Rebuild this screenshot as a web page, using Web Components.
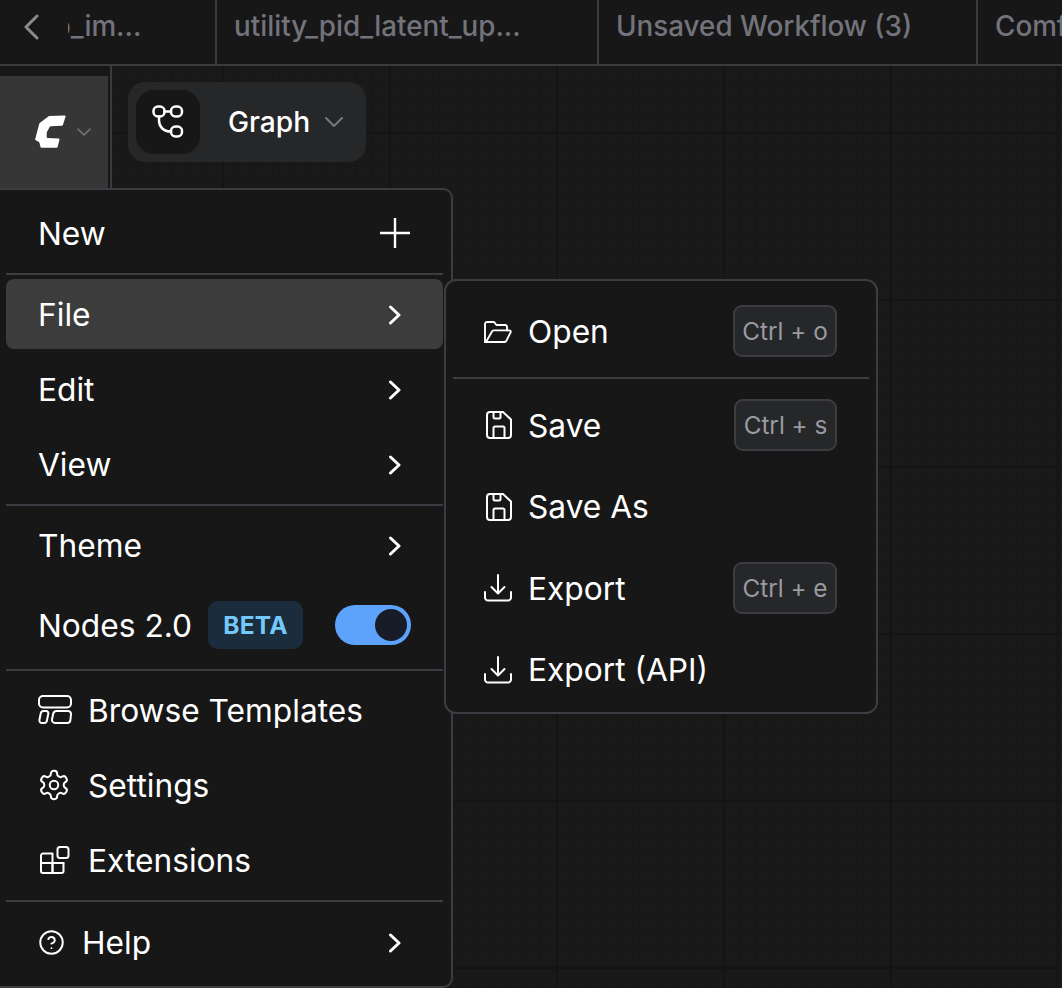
<!DOCTYPE html>
<html lang="en"><head><meta charset="utf-8"><title>Workflow menu</title>
<style>
html,body{margin:0;padding:0;background:#171718;}
body{width:1062px;height:988px;overflow:hidden;font-family:Inter,"Liberation Sans",sans-serif;color:#fff;}
</style></head><body>
<app-shell>
  <tab-bar>
    <work-tab style="--w:149px" clip>o_im...</work-tab>
    <work-tab style="--w:382px">utility_pid_latent_up...</work-tab>
    <work-tab style="--w:379px">Unsaved Workflow (3)</work-tab>
    <work-tab style="--w:200px">ComfyUI</work-tab>
  </tab-bar>
  <work-space>
    <side-bar slot="side"><logo-button></logo-button></side-bar>
    <graph-pill slot="canvas">Graph</graph-pill>
    <main-menu slot="overlay">
      <menu-item plus style="margin-top:8px">New</menu-item>
      <menu-rule style="margin:4.500px 0 4.500px"></menu-rule>
      <menu-item chevron active>File</menu-item>
      <menu-item chevron style="margin-top:5px">Edit</menu-item>
      <menu-item chevron style="margin-top:5px">View</menu-item>
      <menu-rule style="margin:5px 0 4px"></menu-rule>
      <menu-item chevron>Theme</menu-item>
      <menu-item style="margin-top:7px">Nodes 2.0<beta-badge slot="after">BETA</beta-badge><toggle-switch slot="end"></toggle-switch></menu-item>
      <menu-rule style="margin:7px 0 4px"></menu-rule>
      <menu-item icon="templates" gap="50">Browse Templates</menu-item>
      <menu-item icon="gear" gap="50" style="margin-top:5px">Settings</menu-item>
      <menu-item icon="blocks" gap="50" style="margin-top:5px">Extensions</menu-item>
      <menu-rule style="margin:5px 0 5px"></menu-rule>
      <menu-item icon="help" gap="44" chevron>Help</menu-item>
    </main-menu>
    <sub-menu slot="overlay">
      <sub-item icon="folder">Open<key-cap slot="end" style="--kw:104px">Ctrl + o</key-cap></sub-item>
      <menu-rule style="margin:4px 0 6px"></menu-rule>
      <sub-item icon="save">Save<key-cap slot="end" style="--kw:103px;margin-top:0">Ctrl + s</key-cap></sub-item>
      <sub-item icon="save">Save As</sub-item>
      <sub-item icon="download">Export<key-cap slot="end" style="--kw:104px;margin-top:0">Ctrl + e</key-cap></sub-item>
      <sub-item icon="download">Export (API)</sub-item>
    </sub-menu>
  </work-space>
</app-shell>
<script>
const ICONS={
 chevRight:{vb:'0 0 14 20',w:14,h:20,sw:3,d:'<path d="M2.500 2 11 10l-8.500 8"/>'},
 chevDown:{vb:'0 0 20 12',w:20,h:12,sw:2,d:'<path d="M2 2l8 8 8-8"/>'},
 chevBack:{vb:'0 0 16 26',w:16,h:26,sw:3,d:'<path d="M14 2 3 13l11 11"/>'},
 plus:{vb:'0 0 30 30',w:30,h:30,sw:2.400,d:'<path d="M15 0v30M0 15h30"/>'},
 folder:{vb:'0 0 28 22',w:28,h:22,sw:1.900,d:'<path d="M4.500 21H1V3a2 2 0 0 1 2-2h6.200a2 2 0 0 1 1.500.7L12.400 4H21a2 2 0 0 1 2 2v3.400"/><path d="M1 21h19.500a2 2 0 0 0 1.900-1.400l4.200-8.200a1.400 1.400 0 0 0-1.300-2H9.800a2 2 0 0 0-1.800 1.100L2 21"/>'},
 save:{vb:'0 0 26 28',w:26,h:28,sw:2,d:'<path d="M4 1h13l8 7.500V24a3 3 0 0 1-3 3H4a3 3 0 0 1-3-3V4a3 3 0 0 1 3-3z"/><path d="M7.500 1v5a1.500 1.500 0 0 0 1.500 1.500h4a1.500 1.500 0 0 0 1.500-1.500V1"/><path d="M7.500 27V17a1.500 1.500 0 0 1 1.500-1.500h8a1.500 1.500 0 0 1 1.500 1.500v10"/>'},
 download:{vb:'0 0 28 28',w:28,h:28,sw:2,d:'<path d="M1 18v5.500a3 3 0 0 0 3 3h20a3 3 0 0 0 3-3V18"/><path d="M14 1v18M7.500 13l6.500 6.500L20.500 13"/>'},
 templates:{vb:'0 0 34 30',w:34,h:30,sw:2,d:'<rect x="1" y="1" width="32" height="11.500" rx="4"/><path d="M5.500 16h2.700a2.200 2.200 0 0 1 2.100 2.700l-1.400 6.800a2.800 2.800 0 0 1-2.700 2.500H4a2.600 2.600 0 0 1-2.600-3l1.300-6.500A3 3 0 0 1 5.500 16z"/><path d="M18.500 16H30a3 3 0 0 1 3 3.300l-.6 5.700a3.200 3.200 0 0 1-3.200 3H17a3 3 0 0 1-3-3.500l1.200-5.700a3.500 3.500 0 0 1 3.300-2.800z"/>'},
 gear:{vb:'0 0 24 24',w:34,h:34,sw:1.400,d:'<path d="M12.220 2h-.44a2 2 0 0 0-2 2v.18a2 2 0 0 1-1 1.730l-.43.250a2 2 0 0 1-2 0l-.15-.08a2 2 0 0 0-2.730.730l-.22.380a2 2 0 0 0 .73 2.730l.15.100a2 2 0 0 1 1 1.720v.510a2 2 0 0 1-1 1.740l-.15.090a2 2 0 0 0-.73 2.730l.22.380a2 2 0 0 0 2.730.730l.15-.080a2 2 0 0 1 2 0l.43.250a2 2 0 0 1 1 1.730V20a2 2 0 0 0 2 2h.44a2 2 0 0 0 2-2v-.18a2 2 0 0 1 1-1.730l.43-.250a2 2 0 0 1 2 0l.15.080a2 2 0 0 0 2.730-.730l.22-.390a2 2 0 0 0-.73-2.730l-.15-.080a2 2 0 0 1-1-1.740v-.500a2 2 0 0 1 1-1.740l.15-.090a2 2 0 0 0 .73-2.730l-.22-.380a2 2 0 0 0-2.730-.730l-.15.080a2 2 0 0 1-2 0l-.43-.250a2 2 0 0 1-1-1.730V4a2 2 0 0 0-2-2z"/><circle cx="12" cy="12" r="3"/>'},
 blocks:{vb:'0 0 30 28',w:30,h:28,sw:2,d:'<path d="M3 7.500h9.500V27H3a2 2 0 0 1-2-2V9.500a2 2 0 0 1 2-2z"/><path d="M1 17h22.500v8a2 2 0 0 1-2 2h-9V17"/><path d="M12.500 17h11"/><rect x="17.500" y="1" width="11" height="11" rx="2.500"/>'},
 help:{vb:'0 0 24 24',w:27,h:27,sw:1.700,d:'<circle cx="12" cy="12" r="10"/><path d="M9.100 9a3 3 0 0 1 5.800 1c0 2-3 3-3 3"/><path d="M12 17h.01"/>'},
 graph:{vb:'0 0 32 34',w:32,h:34,sw:2.500,d:'<rect x="1.500" y="1.500" width="11" height="10" rx="4.500"/><rect x="19" y="1.500" width="11" height="10" rx="4.500"/><rect x="19" y="21.500" width="11" height="10" rx="4.500"/><path d="M12.500 6.500H19M7 11.500v4c0 6 4 11 12 11"/>'},
 logo:{vb:'0 0 31 34',w:31,h:34,fill:true,d:'<path d="M14.300 1 29.800.500q1 0 .8 1L28 9.800q-.3 1-1.300 1L16 11.200q-.8 0-1.200.6l-2.600 4.600q-.5.800-.5 1.600v4q0 1 1 1l11 .5q1 0 .8 1l-1.900 7.500q-.2.800-1 .8H6.500q-.8 0-1-.8L4.500 28q-.2-.8-1-1.200L.8 25.200q-.8-.5-.6-1.300L4.200 9q.2-.7.800-1.200L13.300 1.400q.4-.4 1-.4z"/>'}
};
function define(name,css,html,init){
  customElements.define(name,class extends HTMLElement{
    constructor(){super();const r=this.attachShadow({mode:'open'});r.innerHTML='<style>'+css+'</style>'+html;}
    connectedCallback(){if(init)init.call(this,this.shadowRoot);}
  });
}
define('ui-icon',`:host{display:block;line-height:0;flex:none}svg{display:block}`,'',function(r){
  const i=ICONS[this.getAttribute('name')];if(!i||r.querySelector('svg'))return;
  const c=this.getAttribute('color')||'currentColor';
  r.innerHTML+=`<svg xmlns="http://www.w3.org/2000/svg" width="${i.w}" height="${i.h}" viewBox="${i.vb}" ${i.fill?`fill="${c}"`:`fill="none" stroke="${c}" stroke-width="${i.sw}" stroke-linecap="round" stroke-linejoin="round"`}>${i.d}</svg>`;
});
define('app-shell',`:host{display:flex;flex-direction:column;width:1062px;height:988px;overflow:hidden;background:#171718}`,'<slot></slot>');
define('tab-bar',`:host{display:flex;flex:none;background:#171718;border-bottom:2px solid #3a3a3f;box-sizing:border-box;height:66px}
.back{flex:none;width:68px;display:flex;align-items:center;padding-left:23px;box-sizing:border-box;color:#8b8b8f;padding-bottom:10px;position:relative;z-index:1;background:#171718}
.strip{display:flex;flex:1;overflow:hidden;min-width:0}
.in{display:flex;flex:none}`,
`<div class="back"><ui-icon name="chevBack"></ui-icon></div><div class="strip"><div class="in"><slot></slot></div></div>`);
define('work-tab',`:host{display:flex;flex:none;box-sizing:border-box;width:var(--w);height:64px;padding:0 0 0 17px;border-right:2px solid #3a3a3f;color:#73737b;font-size:27.800px;font-weight:500;white-space:nowrap;line-height:52px}
:host([clip]){padding-left:0;text-indent:-14px;overflow:hidden}
:host(:last-child){border-right:0}`,'<slot></slot>');
define('work-space',`:host{display:flex;flex:1;min-height:0;position:relative;background-color:#19191a;
 background-image:linear-gradient(90deg,#141415 0 2px,transparent 2px),linear-gradient(#141415 0 2px,transparent 2px),linear-gradient(90deg,#161617 0 1px,transparent 1px),linear-gradient(#161617 0 1px,transparent 1px);
 background-size:167px 167px,167px 167px,16.700px 16.700px,16.700px 16.700px;background-position:55px 0,0 66px,5px 0,0 -1px}
.canvas{flex:1;padding:16px 0 0 16px;min-width:0}`,
`<slot name="side"></slot><div class="canvas"><slot name="canvas"></slot></div><slot name="overlay"></slot>`);
define('side-bar',`:host{display:block;flex:none;width:112px;box-sizing:border-box;border-right:2px solid #3a3a3f;background:#171718;padding-top:10px}`,'<slot></slot>');
define('logo-button',`:host{display:flex;width:108px;height:112px;background:#363637;align-items:center;box-sizing:border-box;padding:0 0 0 35px;gap:9px}`,
`<ui-icon name="logo" color="#fff"></ui-icon><ui-icon name="chevDown" color="#77777b" style="transform:scale(.75);margin-left:-1px"></ui-icon>`);
define('graph-pill',`:host{display:inline-flex;align-items:center;box-sizing:border-box;width:238px;height:80px;background:#262729;border-radius:17px;padding:8px;font-size:28.200px;font-weight:500;color:#fff}
.i{width:64px;height:64px;background:#171718;border-radius:18px;display:flex;align-items:center;justify-content:center;flex:none}
.t{margin-left:28px;flex:1}`,
`<div class="i"><ui-icon name="graph"></ui-icon></div><div class="t"><slot></slot></div><ui-icon name="chevDown" color="#77787e" style="margin-right:14px"></ui-icon>`);
define('main-menu',`:host{position:absolute;left:-2px;top:122px;width:455px;height:800px;box-sizing:border-box;background:#171718;border:2px solid #3c3c42;border-radius:0 10px 10px 0;display:flex;flex-direction:column;padding:0 8px 0 6px}`,'<slot></slot>');
define('menu-item',`:host{display:flex;flex:none;align-items:center;height:70px;box-sizing:border-box;padding:0 41px 0 32px;border-radius:8px;font-size:31.700px;color:#fff;white-space:nowrap}
:host([active]){background:#3c3c3d}
.ic{display:none;flex:none;align-items:center}
.after{margin-left:16px;display:flex}
.sp{flex:1}
.end{display:flex;align-items:center}`,
`<span class="ic"></span><span class="label"><slot></slot></span><span class="after"><slot name="after"></slot></span><span class="sp"></span><span class="end"><slot name="end"></slot></span>`,
function(r){
  const ic=r.querySelector('.ic'),end=r.querySelector('.end');
  if(this.hasAttribute('icon')&&!ic.firstChild){
    ic.style.display='flex';ic.style.width=this.getAttribute('gap')+'px';
    const n=this.getAttribute('icon');
    const m={gear:'-1px',blocks:'2px',help:'0',templates:'0'}[n];
    ic.innerHTML=`<ui-icon name="${n}" style="margin-left:${m}"></ui-icon>`;
  }
  if(this.hasAttribute('chevron')&&!end.querySelector('ui-icon'))end.insertAdjacentHTML('beforeend','<ui-icon name="chevRight" style="margin-top:1px"></ui-icon>');
  if(this.hasAttribute('plus')&&!end.querySelector('ui-icon')){end.insertAdjacentHTML('beforeend','<ui-icon name="plus" style="margin-right:-8px"></ui-icon>');}
  if(!this.querySelector('[slot=end]')&&!this.hasAttribute('chevron')&&!this.hasAttribute('plus'))end.style.display='none';
  if(this.querySelector('toggle-switch')){this.style.height='75px';this.style.paddingRight='32px';r.querySelector('.label').style.marginTop='2px';}
});
define('menu-rule',`:host{display:block;flex:none;height:2px;background:#3c3c42}`,'');
define('beta-badge',`:host{display:flex;align-items:center;justify-content:center;width:95px;height:48px;border-radius:10px;background:#1b2d3d;color:#75c9fa;font-size:24.500px;font-weight:700;letter-spacing:.2px}`,'<slot></slot>');
define('toggle-switch',`:host{display:block;width:76px;height:40px;border-radius:20px;background:#5ea3fb;box-sizing:border-box;padding:4px 4px 4px 40px}
.k{width:32px;height:32px;border-radius:50%;background:#171c28}`,'<div class="k"></div>');
define('sub-menu',`:host{position:absolute;left:444px;top:213px;width:434px;height:435px;box-sizing:border-box;background:#171718;border:2px solid #3c3c42;border-radius:12px;display:flex;flex-direction:column;padding:10px 7px 0 7px}`,'<slot></slot>');
define('sub-item',`:host{display:flex;flex:none;align-items:center;height:81.500px;box-sizing:border-box;padding:0 32px 0 30px;font-size:31.700px;color:#fff;white-space:nowrap}
.ic{width:45px;flex:none;display:flex;align-items:center}.sp{flex:1}`,
`<span class="ic"></span><span><slot></slot></span><span class="sp"></span><slot name="end"></slot>`,
function(r){const ic=r.querySelector('.ic');if(!ic.firstChild){const n=this.getAttribute('icon');ic.innerHTML=`<ui-icon name="${n}" style="margin-left:${n==='save'?'3px':'1px'}"></ui-icon>`;}});
define('key-cap',`:host{display:flex;align-items:center;justify-content:center;box-sizing:border-box;width:var(--kw);height:52px;border-radius:9px;background:#262729;border:2px solid #3c3c42;color:#9a9aa3;font-size:24.300px;margin-top:-2px}`,'<slot></slot>');
</script>
</body></html>
